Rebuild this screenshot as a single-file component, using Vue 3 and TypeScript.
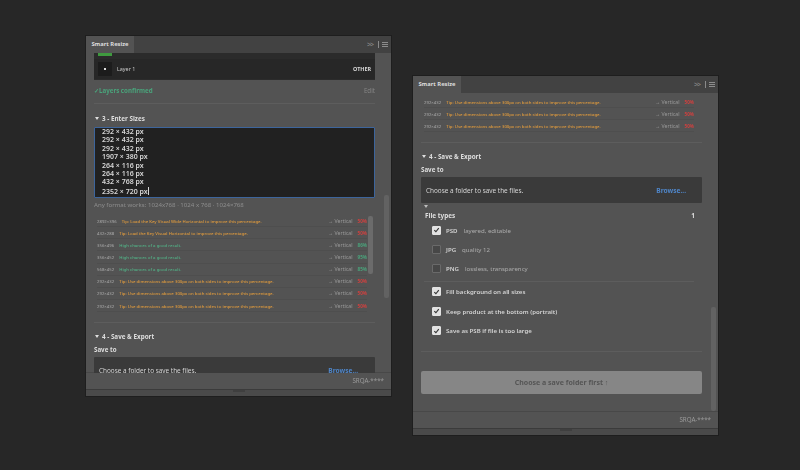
<script setup lang="ts">
interface SizeRow {
  size: string
  tip: string
  kind: 'warn' | 'good'
  pct: string
}

const wideTip = 'Tip: Use dimensions above 300px on both sides to improve this percentage.'

const leftRows: SizeRow[] = [
  { size: '2892×396', tip: 'Tip: Load the Key Visual Wide Horizontal to improve this percentage.', kind: 'warn', pct: '50%' },
  { size: '432×288', tip: 'Tip: Load the Key Visual Horizontal to improve this percentage.', kind: 'warn', pct: '50%' },
  { size: '356×496', tip: 'High chances of a good result.', kind: 'good', pct: '86%' },
  { size: '356×452', tip: 'High chances of a good result.', kind: 'good', pct: '95%' },
  { size: '568×452', tip: 'High chances of a good result.', kind: 'good', pct: '85%' },
  { size: '292×432', tip: wideTip, kind: 'warn', pct: '50%' },
  { size: '292×432', tip: wideTip, kind: 'warn', pct: '50%' },
  { size: '292×432', tip: wideTip, kind: 'warn', pct: '50%' },
]

const rightRows: SizeRow[] = [
  { size: '292×432', tip: wideTip, kind: 'warn', pct: '50%' },
  { size: '292×432', tip: wideTip, kind: 'warn', pct: '50%' },
  { size: '292×432', tip: wideTip, kind: 'warn', pct: '50%' },
]

const sizes = ['292 × 432 px', '292 × 432 px', '292 × 432 px', '1907 × 380 px', '264 × 116 px', '264 × 116 px', '432 × 768 px']

const fileTypes = [
  { name: 'PSD', note: 'layered, editable', on: true },
  { name: 'JPG', note: 'quality 12', on: false },
  { name: 'PNG', note: 'lossless, transparency', on: false },
]

const options = ['Fill background on all sizes', 'Keep product at the bottom (portrait)', 'Save as PSB if file is too large']
</script>

<template>
  <div class="desktop">
    <!-- left window -->
    <section class="panel panel-left">
      <header class="tabbar">
        <span class="tab">Smart Resize</span>
        <span class="tab-tools">
          <span class="chev">&gt;&gt;</span>
          <span class="tool-sep"></span>
          <svg width="6" height="5" viewBox="0 0 6 5"><path d="M0 .5h6M0 2.5h6M0 4.5h6" stroke="#8c8c8c" stroke-width="1"/></svg>
        </span>
      </header>
      <div class="body">
        <div class="layer-box">
          <div class="green-tab"></div>
          <div class="layer-row">
            <span class="thumb"><i></i></span>
            <span class="layer-name">Layer 1</span>
            <span class="layer-tag">OTHER</span>
          </div>
        </div>
        <div class="confirmed">
          <span class="ok">✓Layers confirmed</span>
          <span class="edit">Edit</span>
        </div>
        <div class="rule"></div>
        <h3 class="step step-3"><span class="tri"></span>3 - Enter Sizes</h3>
        <div class="sizes-input">
          <div v-for="(s, i) in sizes" :key="i">{{ s }}</div>
          <div>2352 × 720 px<span class="caret"></span></div>
        </div>
        <p class="hint">Any format works: 1024x768 · 1024 x 768 · 1024×768</p>
        <ul class="rows">
          <li v-for="(r, i) in leftRows" :key="i" class="row">
            <span class="size">{{ r.size }}</span>
            <span class="tip" :class="r.kind">{{ r.tip }}</span>
            <span class="orient">→ Vertical</span>
            <span class="pct" :class="r.kind">{{ r.pct }}</span>
          </li>
        </ul>
        <div class="rule rule-save"></div>
        <h3 class="step step-4"><span class="tri"></span>4 - Save &amp; Export</h3>
        <div class="save-label">Save to</div>
        <div class="folder">
          <span>Choose a folder to save the files.</span>
          <a class="browse">Browse...</a>
        </div>
        <span class="inner-thumb"></span>
        <span class="outer-thumb"></span>
      </div>
      <footer class="foot">SRQA-****</footer>
      <div class="grip"><span></span></div>
    </section>

    <!-- right window -->
    <section class="panel panel-right">
      <header class="tabbar">
        <span class="tab">Smart Resize</span>
        <span class="tab-tools">
          <span class="chev">&gt;&gt;</span>
          <span class="tool-sep"></span>
          <svg width="6" height="5" viewBox="0 0 6 5"><path d="M0 .5h6M0 2.5h6M0 4.5h6" stroke="#8c8c8c" stroke-width="1"/></svg>
        </span>
      </header>
      <div class="body body-right">
        <ul class="rows rows-right">
          <li v-for="(r, i) in rightRows" :key="i" class="row">
            <span class="size">{{ r.size }}</span>
            <span class="tip" :class="r.kind">{{ r.tip }}</span>
            <span class="orient">→ Vertical</span>
            <span class="pct" :class="r.kind">{{ r.pct }}</span>
          </li>
        </ul>
        <div class="rule rule-save"></div>
        <h3 class="step step-4"><span class="tri"></span>4 - Save &amp; Export</h3>
        <div class="save-label">Save to</div>
        <div class="folder folder-full">
          <span>Choose a folder to save the files.</span>
          <a class="browse">Browse...</a>
        </div>
        <span class="tri tri-small"></span>
        <div class="types-head">
          <span>File types</span>
          <span class="count">1</span>
        </div>
        <label v-for="t in fileTypes" :key="t.name" class="check type-line">
          <span class="box" :class="{ on: t.on }">
            <svg v-if="t.on" width="8" height="8" viewBox="0 0 8 8"><path d="M1.5 4.2 3.3 6 6.6 1.8" fill="none" stroke="#333" stroke-width="1.3"/></svg>
          </span>
          <b>{{ t.name }}</b><em>{{ t.note }}</em>
        </label>
        <div class="rule rule-types"></div>
        <label v-for="o in options" :key="o" class="check option-line">
          <span class="box on">
            <svg width="8" height="8" viewBox="0 0 8 8"><path d="M1.5 4.2 3.3 6 6.6 1.8" fill="none" stroke="#333" stroke-width="1.3"/></svg>
          </span>
          <b>{{ o }}</b>
        </label>
        <div class="rule rule-options"></div>
        <button class="export" type="button">Choose a save folder first ↑</button>
        <span class="outer-thumb outer-thumb-right"></span>
      </div>
      <footer class="foot">SRQA-****</footer>
      <div class="grip"><span></span></div>
    </section>
  </div>
</template>

<style>
html,
body {
  margin: 0;
  background: #272727;
}
</style>

<style scoped>
.desktop {
  position: relative;
  width: 800px;
  height: 470px;
  overflow: hidden;
  background: #272727;
  font-family: "Noto Sans", "Open Sans", sans-serif;
  color: #d4d4d4;
}

.panel {
  position: absolute;
  width: 305px;
  display: flex;
  flex-direction: column;
  background: #535353;
  box-shadow: 0 0 0 1px #1e1e1e;
  filter: blur(0.4px);
}

.panel-left {
  left: 86px;
  top: 36px;
  height: 360px;
}

.panel-right {
  left: 413px;
  top: 76px;
  height: 359px;
}

.tabbar {
  flex: none;
  height: 17px;
  display: flex;
  align-items: stretch;
  justify-content: space-between;
  background: #424242;
}

.tab {
  width: 48px;
  background: #535353;
  font-size: 5.8px;
  font-weight: 700;
  line-height: 17px;
  text-align: center;
  color: #dcdcdc;
  white-space: nowrap;
}

.tab-tools {
  display: flex;
  align-items: center;
  gap: 3px;
  padding-right: 3px;
}

.chev {
  font-size: 7px;
  letter-spacing: -1px;
  color: #8c8c8c;
}

.tool-sep {
  width: 1px;
  height: 7px;
  margin-left: 2px;
  background: #8a8a8a;
}

.body {
  position: relative;
  flex: 1;
  min-height: 0;
  overflow: hidden;
  padding: 0 16px 0 8px;
}

.layer-box {
  height: 27px;
  background: #2b2b2b;
}

.green-tab {
  width: 14px;
  height: 3px;
  margin-left: 4px;
  background: #3f9a3f;
}

.layer-row {
  display: flex;
  align-items: center;
  height: 20px;
  margin-top: 3px;
  padding: 0 4px 0 4px;
  background: #272727;
  box-sizing: border-box;
  font-size: 5.4px;
}

.thumb {
  width: 14px;
  height: 14px;
  display: flex;
  align-items: center;
  justify-content: center;
  margin-right: 5px;
  background: #1c1c1c;
}

.thumb i {
  width: 2px;
  height: 2px;
  background: #ddd;
}

.layer-name {
  flex: 1;
  color: #c9c9c9;
}

.layer-tag {
  font-weight: 700;
  color: #d8d8d8;
}

.confirmed {
  display: flex;
  justify-content: space-between;
  align-items: center;
  height: 20px;
  font-size: 6.2px;
}

.ok {
  font-weight: 700;
  color: #4aa37b;
}

.edit {
  color: #858585;
}

.rule {
  height: 1px;
  background: #5d5d5d;
}

.confirmed + .rule {
  margin-top: 3px;
}

.step {
  display: flex;
  align-items: center;
  gap: 3px;
  height: 10px;
  margin: 0;
  font-size: 6.3px;
  font-weight: 700;
  color: #dedede;
}

.step-3 {
  margin-top: 9px;
}

.tri {
  display: inline-block;
  width: 0;
  height: 0;
  margin-left: 1px;
  border-left: 2.5px solid transparent;
  border-right: 2.5px solid transparent;
  border-top: 3px solid #dedede;
}

.sizes-input {
  height: 71px;
  box-sizing: border-box;
  margin-top: 4px;
  padding: 0 7px;
  overflow: hidden;
  background: #212121;
  border: 1px solid #3d659c;
  border-radius: 1px;
  font-size: 7px;
  font-weight: 600;
  line-height: 8.4px;
  color: #d6d6d6;
}

.caret {
  display: inline-block;
  width: 1px;
  height: 8px;
  vertical-align: -1px;
  background: #d6d6d6;
}

.hint {
  margin: 2px 0 0;
  font-size: 6.1px;
  line-height: 10px;
  color: #8e8e8e;
}

.rows {
  list-style: none;
  margin: 5px 0 0;
  padding: 0 8px 0 3px;
}

.row {
  display: flex;
  align-items: center;
  height: 12.15px;
  border-bottom: 1px solid #4e4e4e;
  box-sizing: border-box;
  font-size: 4.3px;
  font-weight: 500;
  white-space: nowrap;
}

.size {
  color: #a0a0a0;
  margin-right: 5px;
}

.tip {
  flex: 1;
}

.tip.warn {
  color: #e39c3c;
}

.tip.good {
  color: #52b387;
}

.orient {
  font-size: 5.2px;
  font-weight: 400;
  color: #9a9a9a;
  margin-right: 5px;
}

.pct {
  font-size: 4.6px;
  font-weight: 700;
}

.pct.warn {
  color: #d0403f;
}

.pct.good {
  color: #4aa37b;
}

.rule-save {
  flex: none;
  margin-top: 10px;
}

.step-4 {
  margin-top: 8px;
}

.save-label {
  margin-top: 4px;
  font-size: 6.2px;
  font-weight: 700;
  line-height: 9px;
  color: #dedede;
}

.folder {
  display: flex;
  align-items: center;
  justify-content: space-between;
  height: 26px;
  flex: none;
  margin-top: 3px;
  padding: 0 17px 0 5px;
  background: #3a3a3a;
  border-radius: 1px;
  font-size: 6.4px;
  color: #d4d4d4;
}

.browse {
  font-size: 6.6px;
  font-weight: 700;
  color: #4f86c9;
}

.inner-thumb {
  position: absolute;
  right: 18px;
  top: 163px;
  width: 5px;
  height: 58px;
  border-radius: 2px;
  background: #6b6b6b;
}

.outer-thumb {
  position: absolute;
  right: 2px;
  top: 142px;
  width: 5px;
  height: 103px;
  border-radius: 2px;
  background: #626262;
}

.foot {
  flex: none;
  height: 16px;
  padding: 0 7px;
  background: #535353;
  box-shadow: 0 -1px 0 #484848;
  font-size: 6.2px;
  line-height: 16px;
  text-align: right;
  color: #9a9a9a;
}

.grip {
  flex: none;
  height: 7px;
  display: flex;
  justify-content: center;
  background: #4a4a4a;
  border-top: 1px solid #3b3b3b;
  box-sizing: border-box;
}

.grip span {
  width: 12px;
  height: 2px;
  background: #3f3f3f;
}

.rows-right {
  margin-top: 3px;
}

.folder-full {
  padding-right: 16px;
}

.tri-small {
  display: block;
  margin: 2px 0 0 3px;
  border-top-color: #bdbdbd;
}

.types-head {
  display: flex;
  justify-content: space-between;
  height: 9px;
  padding: 0 7px 0 4px;
  margin-top: 3px;
  font-size: 6.4px;
  font-weight: 700;
  line-height: 10px;
  color: #dedede;
}

.check {
  display: flex;
  align-items: center;
  height: 19.3px;
  padding-left: 11px;
  font-size: 6.1px;
}

.box {
  flex: none;
  width: 9px;
  height: 9px;
  display: flex;
  align-items: center;
  justify-content: center;
  margin-right: 5px;
  box-sizing: border-box;
  border: 1px solid #6a6a6a;
  border-radius: 1px;
  background: #474747;
}

.box.on {
  background: #e2e2e2;
  border-color: #e2e2e2;
}

.check b {
  font-weight: 600;
  color: #d4d4d4;
}

.check em {
  margin-left: 6px;
  font-style: normal;
  color: #adadad;
}

.rule-types {
  margin: 3px 8px 0 3px;
}

.rule-options {
  margin-top: 11px;
}

.export {
  display: block;
  width: 100%;
  height: 23px;
  margin-top: 19px;
  padding: 0;
  border: 0;
  border-radius: 2px;
  background: #868686;
  font-family: inherit;
  font-size: 7px;
  font-weight: 700;
  color: #555;
}

.outer-thumb-right {
  top: 214px;
  height: 104px;
}
</style>
